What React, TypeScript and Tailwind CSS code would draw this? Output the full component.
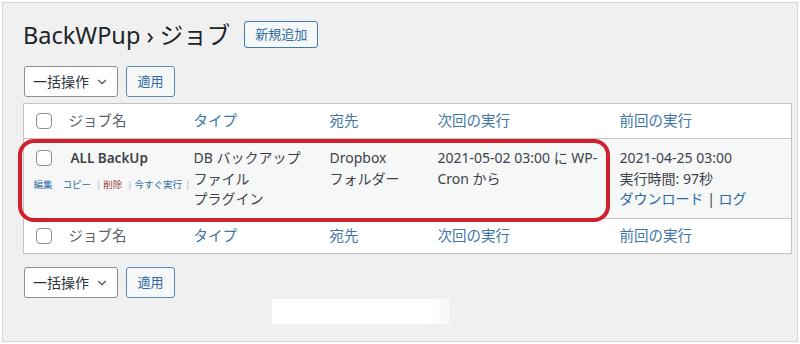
import { ChevronDown } from "lucide-react";

const font = "font-['Noto_Sans','Noto_Sans_CJK_JP',sans-serif]";

function Checkbox() {
  return <span className="block h-4 w-4 rounded-[4px] border border-[#8c8f94] bg-white" />;
}

function BulkActions() {
  return (
    <div className="flex items-center gap-2">
      <div className="flex h-[31px] w-[94px] items-center justify-between rounded-[3px] border border-[#8c8f94] bg-white pl-2 pr-2 text-[14px] text-[#2c3338]">
        <span>一括操作</span>
        <ChevronDown size={14} strokeWidth={2} className="text-[#50575e]" />
      </div>
      <button className="h-[31px] w-[49px] rounded-[3px] border border-[#5b8bb5] bg-[#f6f7f7] text-[13px] text-[#2e6ba3]">
        適用
      </button>
    </div>
  );
}

function HeaderCells({ top }: { top?: boolean }) {
  const cls = `h-[35px] text-left align-middle font-normal text-[14.5px] ${
    top ? "border-b" : "border-t"
  } border-[#c3c4c7]`;
  const link = "text-[#4076a6]";
  const Cell = top ? "th" : "td";
  return (
    <tr>
      <Cell className={`${cls} pl-3`}>
        <Checkbox />
      </Cell>
      <Cell className={`${cls} pl-2 text-[#5a6066]`}>ジョブ名</Cell>
      <Cell className={`${cls} ${link} pl-2`}>タイプ</Cell>
      <Cell className={`${cls} ${link} pl-2`}>宛先</Cell>
      <Cell className={`${cls} ${link} pl-2`}>次回の実行</Cell>
      <Cell className={`${cls} ${link} pl-2`}>前回の実行</Cell>
    </tr>
  );
}

export default function App() {
  return (
    <div className={`h-[344px] w-[800px] bg-white p-[2px] ${font}`}>
      <div className="relative flex h-full flex-col border border-[#d6d6d6] bg-[#f0f0f1] pl-[20px] pr-[6px] pt-[18px]">
        {/* Title */}
        <div className="flex h-[27px] items-center">
          <h1 className="mt-[2px] text-[23.5px] font-normal leading-none text-[#1d2327]">
            BackWPup › ジョブ
          </h1>
          <button className="ml-[14px] h-[27px] rounded-[3px] border border-[#3f7ab0] bg-[#f6f7f7] px-[10px] text-[13px] text-[#2e6ba3]">
            新規追加
          </button>
        </div>

        <div className="mt-[18px] pl-px">
          <BulkActions />
        </div>

        {/* Jobs table */}
        <table className="mt-[6px] w-[768px] table-fixed border-collapse border border-[#c3c4c7] bg-white shadow-[0_1px_1px_rgba(0,0,0,0.04)]">
          <colgroup>
            <col className="w-[37px]" />
            <col className="w-[125px]" />
            <col className="w-[136px]" />
            <col className="w-[108px]" />
            <col className="w-[182px]" />
            <col className="w-[180px]" />
          </colgroup>
          <thead>
            <HeaderCells top />
          </thead>
          <tbody>
            <tr className="h-[80px] bg-[#f6f7f7] align-top text-[14px] leading-[20.5px] text-[#3c434a]">
              <td className="pl-3 pt-[11px]">
                <Checkbox />
              </td>
              <td className="pl-[10px] pt-[9px]">
                <div className="text-[13.5px] font-semibold">ALL BackUp</div>
                <div className="-ml-[37px] mt-[9px] flex w-[150px] whitespace-nowrap text-[9.5px] leading-[14px] text-[#2e6ba3]">
                  <span>編集</span>
                  <span className="ml-[10px]">コピー</span>
                  <span className="ml-[5px] text-[#b0b3b8]">|</span>
                  <span className="ml-[2px] text-[#a0463f]">削除</span>
                  <span className="ml-[5px] text-[#b0b3b8]">|</span>
                  <span className="ml-[2px]">今すぐ実行</span>
                  <span className="ml-[3px] text-[#b0b3b8]">|</span>
                </div>
              </td>
              <td className="pl-2 pt-[9px]">
                DB バックアップ
                <br />
                ファイル
                <br />
                プラグイン
              </td>
              <td className="pl-2 pt-[9px]">
                Dropbox
                <br />
                フォルダー
              </td>
              <td className="pl-2 pt-[9px]">
                2021-05-02 03:00 に WP-
                <br />
                Cron から
              </td>
              <td className="pl-2 pt-[9px]">
                2021-04-25 03:00
                <br />
                実行時間: 97秒
                <br />
                <span className="text-[#2e6ba3]">ダウンロード</span> |{" "}
                <span className="text-[#2e6ba3]">ログ</span>
              </td>
            </tr>
          </tbody>
          <tfoot>
            <HeaderCells />
          </tfoot>
        </table>

        <div className="mt-[13px] pl-px">
          <BulkActions />
        </div>

        {/* highlight frame around the job row */}
        <div className="pointer-events-none absolute left-[15px] top-[136px] h-[83px] w-[592px] rounded-[16px] border-[4px] border-[#d0202e]" />

        {/* blank white patch */}
        <div className="absolute left-[269px] top-[296px] h-[25px] w-[178px] bg-gradient-to-r from-white from-[88%] to-[#f7f7f7]" />
      </div>
    </div>
  );
}
